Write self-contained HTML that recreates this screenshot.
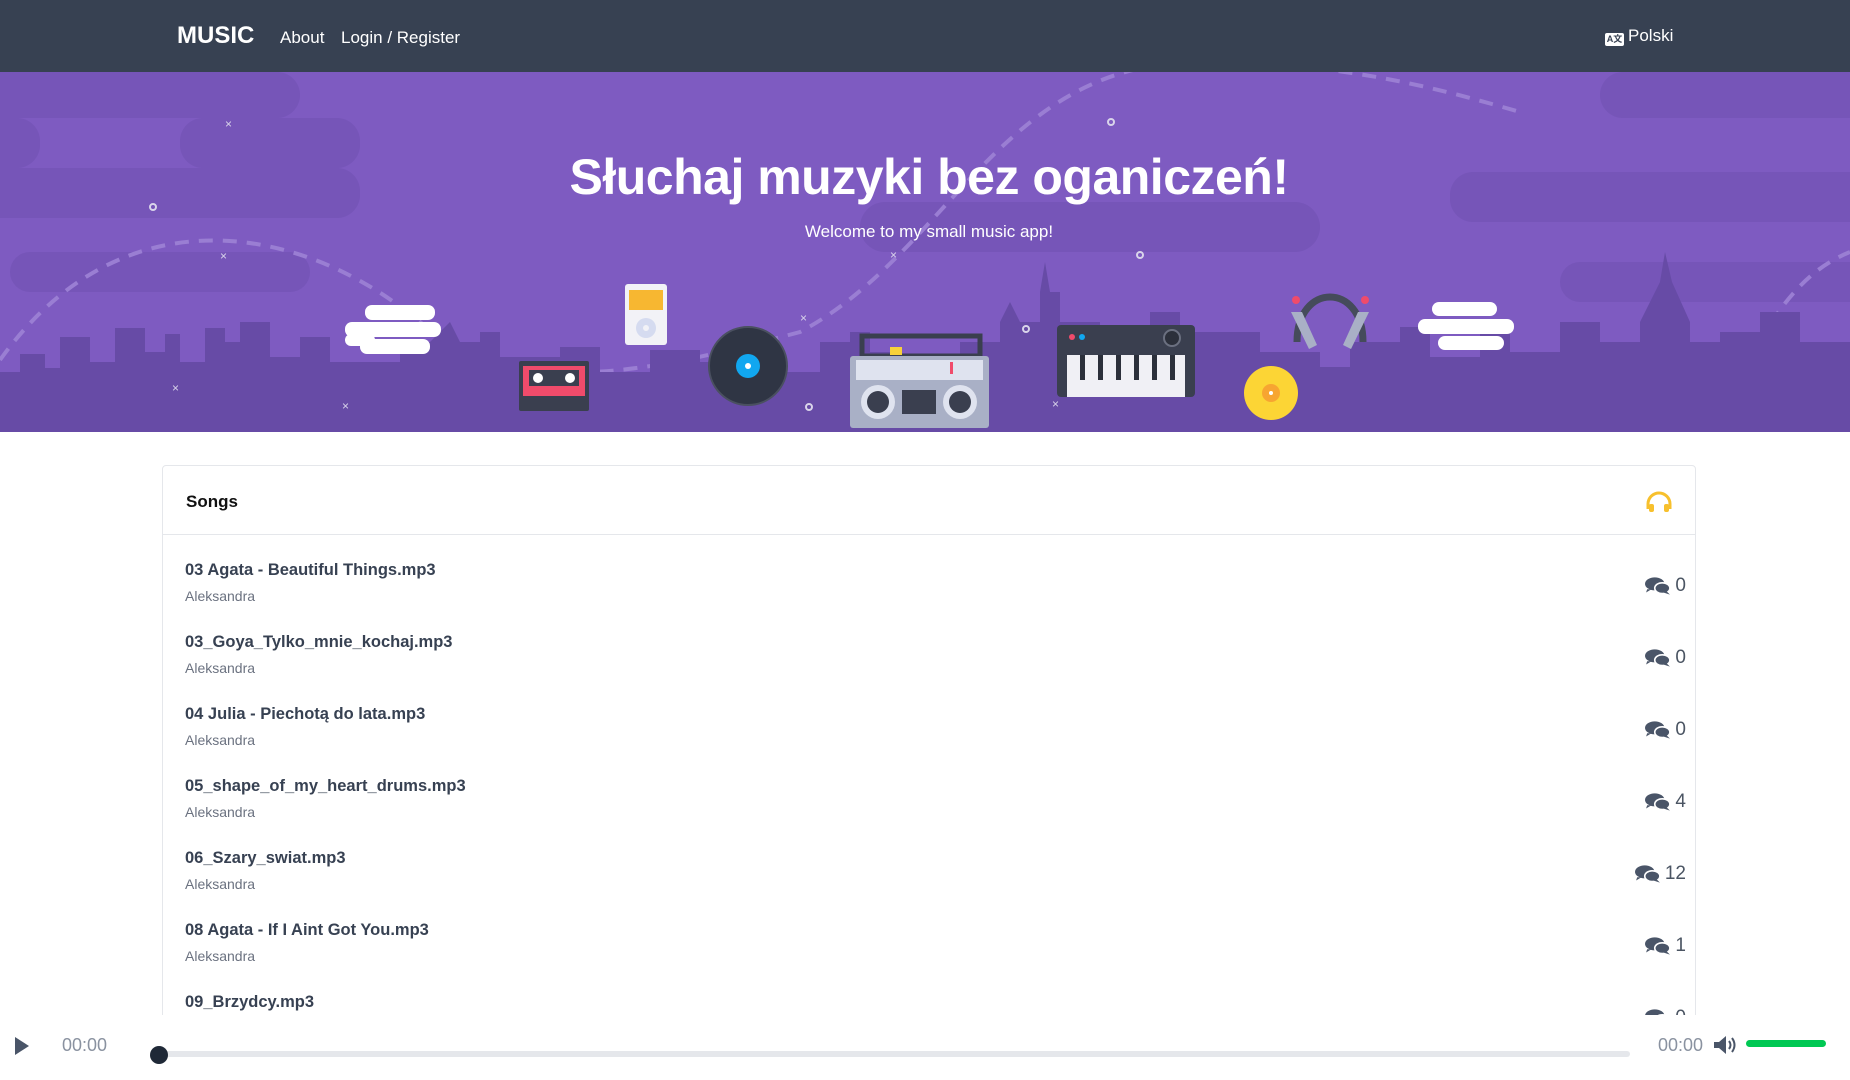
<!DOCTYPE html>
<html><head><meta charset="utf-8"><style>
*{box-sizing:border-box;margin:0;padding:0}
html,body{width:1850px;height:1080px;overflow:hidden}
body{background:#fff;font-family:"Liberation Sans","Noto Sans CJK JP",sans-serif;position:relative}
.nav{position:absolute;left:0;top:0;width:1850px;height:72px;background:#374152;color:#fff}
.brand{position:absolute;left:177px;top:22px;font-size:24px;font-weight:bold}
.nl{position:absolute;top:28px;font-size:17px}
.hero{position:absolute;left:0;top:72px;width:1850px;height:360px;background:#7e5bc1;overflow:hidden}
h1{position:absolute;left:0;width:1858px;top:76px;text-align:center;color:#fff;font-size:50px;font-weight:bold;letter-spacing:-0.5px}
.sub{position:absolute;left:0;width:1858px;top:150px;text-align:center;color:#fff;font-size:17px}
.card{position:absolute;left:162px;top:465px;width:1534px;height:560px;border:1px solid #e5e7eb;border-radius:4px}
.ch{height:69px;border-bottom:1px solid #e5e7eb;position:relative}
.ch b{position:absolute;left:23px;top:26px;font-size:17px;color:#111}
.row{position:absolute;left:23px;right:-2px;height:72px}
.t{font-size:16.5px;font-weight:bold;color:#374152}
.a{font-size:14px;color:#6b7280;margin-top:8px}
.cnt{position:absolute;right:0;top:14px;font-size:19px;color:#4b5563;display:flex;align-items:center;gap:4px}
.player{position:absolute;left:0;top:1015px;width:1850px;height:65px;background:#fff}
</style></head><body>
<div class="nav">
<div class="brand">MUSIC</div>
<div class="nl" style="left:280px">About</div>
<div class="nl" style="left:341px">Login / Register</div>
<div class="nl" style="left:1605px;top:26px"><span style="display:inline-block;width:19px;height:13px;background:#fff;border-radius:2px;vertical-align:-1px;margin-right:4px;font-size:9px;color:#374152;line-height:13px;text-align:center;font-weight:bold">A文</span>Polski</div>
</div>
<div class="hero">
<svg width="1850" height="360" style="position:absolute;left:0;top:0">
<g fill="#7655b8">
<rect x="-40" y="0" width="340" height="46" rx="23"/><rect x="-40" y="46" width="80" height="50" rx="23"/><rect x="180" y="46" width="180" height="50" rx="23"/><rect x="-40" y="96" width="400" height="50" rx="23"/><rect x="10" y="180" width="300" height="40" rx="20"/>
<rect x="1600" y="0" width="300" height="46" rx="23"/><rect x="1450" y="100" width="440" height="50" rx="23"/><rect x="1560" y="190" width="330" height="40" rx="20"/><rect x="860" y="130" width="460" height="50" rx="25"/>
</g>
<path d="M0,288 C120,120 300,150 420,250 C520,330 650,300 800,260 C950,180 1000,-10 1200,-10 C1350,-10 1450,20 1520,40" fill="none" stroke="#9a7ed3" stroke-width="4" stroke-dasharray="14 10"/>
<path d="M1720,360 C1760,250 1800,200 1850,180" fill="none" stroke="#9a7ed3" stroke-width="4" stroke-dasharray="14 10"/>
<path fill="#674ba6" d="M0,360 V300 H20 V282 H45 V296 H60 V265 H90 V290 H115 V256 H145 V280 H165 V262 H180 V290 H205 V256 H225 V270 H240 V250 H270 V285 H300 V265 H330 V290 H400 V270 H430 L450 250 L460 270 H480 V260 H500 V285 H560 V275 H600 V300 H650 V278 H700 V290 H760 V300 H820 V270 H850 V260 H870 V280 H900 V300 H960 V270 H1000 V250 L1010 230 L1020 250 H1040 V220 L1045 190 L1050 220 H1060 V250 H1100 V260 H1150 V240 H1180 V260 H1260 V280 H1320 V295 H1350 V270 H1400 V255 H1430 V285 H1480 V260 H1510 V280 H1560 V250 H1600 V270 H1640 V250 L1660 210 L1665 180 L1672 210 L1690 250 V270 H1720 V260 H1760 V240 H1800 V270 H1850 V360 Z"/>
<g fill="#fff"><rect x="365" y="233" width="70" height="15" rx="7"/><rect x="345" y="250" width="96" height="15" rx="7"/><rect x="360" y="267" width="70" height="15" rx="7"/><rect x="345" y="262" width="30" height="12" rx="6"/>
<rect x="1432" y="230" width="65" height="14" rx="7"/><rect x="1418" y="247" width="96" height="15" rx="7"/><rect x="1438" y="264" width="66" height="14" rx="7"/></g>
<g fill="#d9d4ea" font-size="12" font-family="Liberation Sans"><text x="225" y="56">×</text><text x="220" y="188">×</text><text x="172" y="320">×</text><text x="342" y="338">×</text><text x="890" y="187">×</text><text x="800" y="250">×</text><text x="1052" y="336">×</text></g>
<g fill="none" stroke="#d9d4ea" stroke-width="2"><circle cx="153" cy="135" r="3"/><circle cx="1111" cy="50" r="3"/><circle cx="1140" cy="183" r="3"/><circle cx="809" cy="335" r="3"/><circle cx="1026" cy="257" r="3"/></g>
<rect x="519" y="289" width="70" height="50" rx="2" fill="#3a3f4f"/><rect x="523" y="294" width="62" height="30" fill="#f04b6b"/><rect x="529" y="298" width="50" height="16" fill="#3a3f4f"/><circle cx="538" cy="306" r="5" fill="#fff"/><circle cx="570" cy="306" r="5" fill="#fff"/>
<rect x="625" y="212" width="42" height="61" rx="3" fill="#f2f2f7"/><rect x="629" y="218" width="34" height="20" fill="#f7b731"/><circle cx="646" cy="256" r="10" fill="#d5dbf0"/><circle cx="646" cy="256" r="3" fill="#f2f2f7"/>
<circle cx="748" cy="294" r="39" fill="#2f3544" stroke="#4a5060" stroke-width="2"/><circle cx="748" cy="294" r="12" fill="#11a7f0"/><circle cx="748" cy="294" r="3" fill="#fff"/>
<rect x="862" y="264" width="118" height="20" fill="none" stroke="#3a3f4f" stroke-width="5"/><rect x="850" y="284" width="139" height="72" rx="3" fill="#a9b0c6"/><rect x="856" y="288" width="127" height="20" fill="#dfe3ef"/><rect x="950" y="290" width="3" height="12" fill="#f04b6b"/><circle cx="878" cy="330" r="17" fill="#dfe3ef"/><circle cx="878" cy="330" r="11" fill="#3a3f4f"/><circle cx="960" cy="330" r="17" fill="#dfe3ef"/><circle cx="960" cy="330" r="11" fill="#3a3f4f"/><rect x="902" y="318" width="34" height="24" fill="#3a3f4f"/><rect x="890" y="275" width="12" height="8" fill="#f7d13a"/>
<rect x="1057" y="253" width="138" height="72" rx="4" fill="#3a3f4f"/><rect x="1067" y="283" width="118" height="42" fill="#f0f0f5"/>
<g fill="#2c303b"><rect x="1080" y="283" width="5" height="25"/><rect x="1098" y="283" width="5" height="25"/><rect x="1116" y="283" width="5" height="25"/><rect x="1134" y="283" width="5" height="25"/><rect x="1152" y="283" width="5" height="25"/><rect x="1170" y="283" width="5" height="25"/></g>
<circle cx="1072" cy="265" r="3" fill="#f04b6b"/><circle cx="1082" cy="265" r="3" fill="#11a7f0"/><circle cx="1172" cy="266" r="8" fill="#2c303b" stroke="#6b7080" stroke-width="2"/>
<circle cx="1271" cy="321" r="27" fill="#fcd535"/><circle cx="1271" cy="321" r="9" fill="#f7a531"/><circle cx="1271" cy="321" r="2" fill="#fff"/>
<path d="M1297,270 C1297,210 1363,210 1363,270" fill="none" stroke="#454b5b" stroke-width="7"/><circle cx="1296" cy="228" r="4" fill="#f04b6b"/><circle cx="1365" cy="228" r="4" fill="#f04b6b"/>
<path d="M1291,240 L1302,240 L1317,273 L1309,277 Z" fill="#a9b0c6"/><path d="M1369,240 L1358,240 L1343,273 L1351,277 Z" fill="#a9b0c6"/>
</svg>
<h1>Słuchaj muzyki bez oganiczeń!</h1>
<div class="sub">Welcome to my small music app!</div>
</div>
<div class="card">
<div class="ch"><b>Songs</b>
<svg width="26" height="22" viewBox="0 0 26 22" style="position:absolute;right:23px;top:25px"><path d="M2,18 V13 A11,11 0 0 1 24,13 V18" fill="none" stroke="#f7c02d" stroke-width="3"/><rect x="3" y="13" width="5" height="8" rx="2" fill="#f7c02d"/><rect x="18" y="13" width="5" height="8" rx="2" fill="#f7c02d"/></svg>
</div>
</div>
<div style="position:absolute;left:162px;top:535px;width:1522px">
<div class="row" style="top:26px"><div class="t">03 Agata - Beautiful Things.mp3</div><div class="a">Aleksandra</div><div class="cnt"><svg width="26" height="20" viewBox="0 0 24 16"><ellipse cx="9" cy="6" rx="9" ry="6" fill="#4a5568"/><path d="M2,11 L1,14 L6,11Z" fill="#4a5568"/><ellipse cx="16" cy="10" rx="7" ry="5" fill="#4a5568" stroke="#fff" stroke-width="1.5"/><path d="M20,13 L23,16 L17,14Z" fill="#4a5568"/></svg>0</div></div>
<div class="row" style="top:98px"><div class="t">03_Goya_Tylko_mnie_kochaj.mp3</div><div class="a">Aleksandra</div><div class="cnt"><svg width="26" height="20" viewBox="0 0 24 16"><ellipse cx="9" cy="6" rx="9" ry="6" fill="#4a5568"/><path d="M2,11 L1,14 L6,11Z" fill="#4a5568"/><ellipse cx="16" cy="10" rx="7" ry="5" fill="#4a5568" stroke="#fff" stroke-width="1.5"/><path d="M20,13 L23,16 L17,14Z" fill="#4a5568"/></svg>0</div></div>
<div class="row" style="top:170px"><div class="t">04 Julia - Piechotą do lata.mp3</div><div class="a">Aleksandra</div><div class="cnt"><svg width="26" height="20" viewBox="0 0 24 16"><ellipse cx="9" cy="6" rx="9" ry="6" fill="#4a5568"/><path d="M2,11 L1,14 L6,11Z" fill="#4a5568"/><ellipse cx="16" cy="10" rx="7" ry="5" fill="#4a5568" stroke="#fff" stroke-width="1.5"/><path d="M20,13 L23,16 L17,14Z" fill="#4a5568"/></svg>0</div></div>
<div class="row" style="top:242px"><div class="t">05_shape_of_my_heart_drums.mp3</div><div class="a">Aleksandra</div><div class="cnt"><svg width="26" height="20" viewBox="0 0 24 16"><ellipse cx="9" cy="6" rx="9" ry="6" fill="#4a5568"/><path d="M2,11 L1,14 L6,11Z" fill="#4a5568"/><ellipse cx="16" cy="10" rx="7" ry="5" fill="#4a5568" stroke="#fff" stroke-width="1.5"/><path d="M20,13 L23,16 L17,14Z" fill="#4a5568"/></svg>4</div></div>
<div class="row" style="top:314px"><div class="t">06_Szary_swiat.mp3</div><div class="a">Aleksandra</div><div class="cnt"><svg width="26" height="20" viewBox="0 0 24 16"><ellipse cx="9" cy="6" rx="9" ry="6" fill="#4a5568"/><path d="M2,11 L1,14 L6,11Z" fill="#4a5568"/><ellipse cx="16" cy="10" rx="7" ry="5" fill="#4a5568" stroke="#fff" stroke-width="1.5"/><path d="M20,13 L23,16 L17,14Z" fill="#4a5568"/></svg>12</div></div>
<div class="row" style="top:386px"><div class="t">08 Agata - If I Aint Got You.mp3</div><div class="a">Aleksandra</div><div class="cnt"><svg width="26" height="20" viewBox="0 0 24 16"><ellipse cx="9" cy="6" rx="9" ry="6" fill="#4a5568"/><path d="M2,11 L1,14 L6,11Z" fill="#4a5568"/><ellipse cx="16" cy="10" rx="7" ry="5" fill="#4a5568" stroke="#fff" stroke-width="1.5"/><path d="M20,13 L23,16 L17,14Z" fill="#4a5568"/></svg>1</div></div>
<div class="row" style="top:458px"><div class="t">09_Brzydcy.mp3</div><div class="a">Aleksandra</div><div class="cnt"><svg width="26" height="20" viewBox="0 0 24 16"><ellipse cx="9" cy="6" rx="9" ry="6" fill="#4a5568"/><ellipse cx="16" cy="10" rx="7" ry="5" fill="#4a5568" stroke="#fff" stroke-width="1.5"/></svg>0</div></div>
</div>
<div class="player">
<svg width="18" height="20" style="position:absolute;left:13px;top:21px"><path d="M2,1 L16,10 L2,19Z" fill="#4a5568"/></svg>
<div style="position:absolute;left:62px;top:20px;font-size:18px;color:#8a92a0">00:00</div>
<div style="position:absolute;left:158px;top:36px;width:1472px;height:6px;background:#e5e7eb;border-radius:3px"></div>
<div style="position:absolute;left:150px;top:31px;width:18px;height:18px;border-radius:50%;background:#1f2937"></div>
<div style="position:absolute;left:1658px;top:20px;font-size:18px;color:#8a92a0">00:00</div>
<svg width="26" height="20" viewBox="0 0 26 20" style="position:absolute;left:1713px;top:20px"><path d="M1,7 H6 L13,1 V19 L6,13 H1Z" fill="#4a5568"/><path d="M16,6 Q19,10 16,14 M19,3 Q24,10 19,17" fill="none" stroke="#4a5568" stroke-width="2"/></svg>
<div style="position:absolute;left:1746px;top:25px;width:80px;height:7px;background:#00c853;border-radius:4px"></div>
</div>
</body></html>
